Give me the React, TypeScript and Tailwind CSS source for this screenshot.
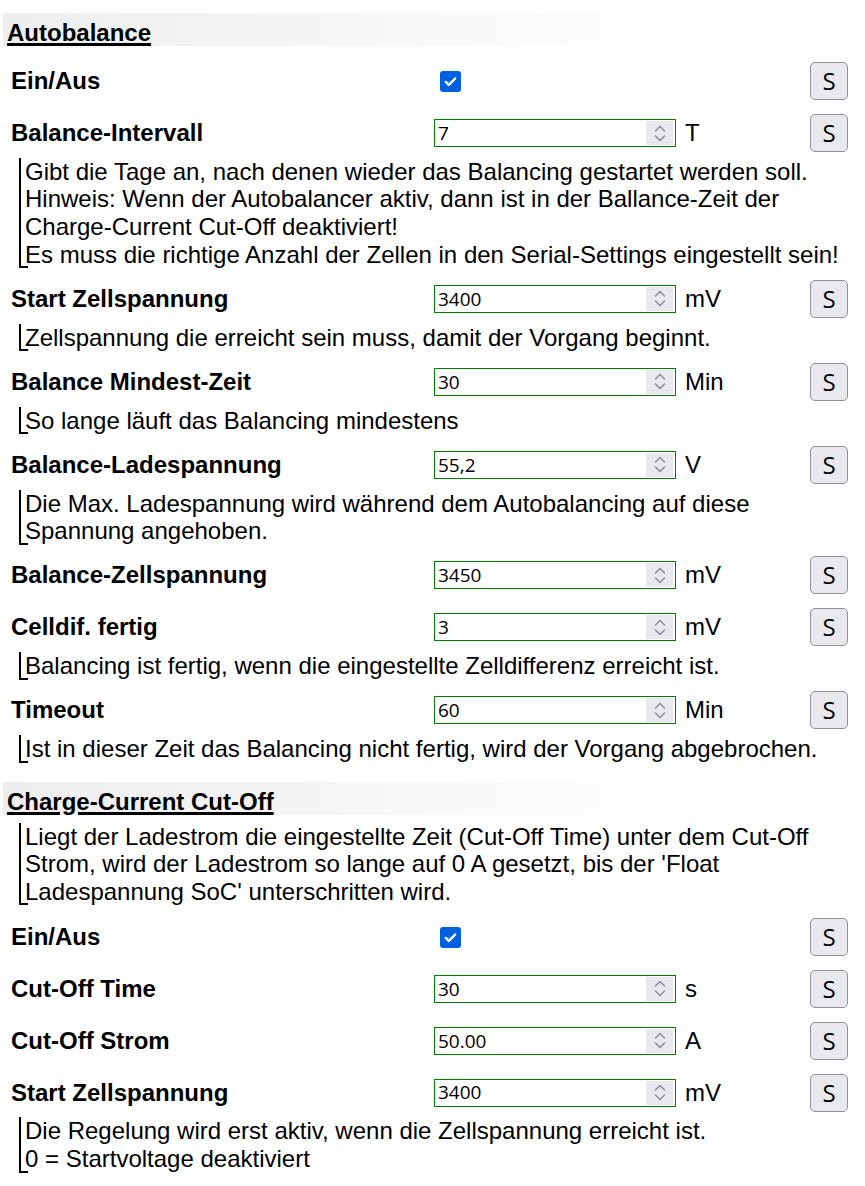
import React from "react";

type Row = {
  label: string;
  kind: "check" | "num";
  value?: string;
  unit?: string;
  desc?: string[];
};

type Section = {
  title: string;
  desc?: string[];
  rows: Row[];
};

const sections: Section[] = [
  {
    title: "Autobalance",
    rows: [
      { label: "Ein/Aus", kind: "check" },
      {
        label: "Balance-Intervall",
        kind: "num",
        value: "7",
        unit: "T",
        desc: [
          "Gibt die Tage an, nach denen wieder das Balancing gestartet werden soll.",
          "Hinweis: Wenn der Autobalancer aktiv, dann ist in der Ballance-Zeit der",
          "Charge-Current Cut-Off deaktiviert!",
          "Es muss die richtige Anzahl der Zellen in den Serial-Settings eingestellt sein!",
        ],
      },
      {
        label: "Start Zellspannung",
        kind: "num",
        value: "3400",
        unit: "mV",
        desc: ["Zellspannung die erreicht sein muss, damit der Vorgang beginnt."],
      },
      {
        label: "Balance Mindest-Zeit",
        kind: "num",
        value: "30",
        unit: "Min",
        desc: ["So lange läuft das Balancing mindestens"],
      },
      {
        label: "Balance-Ladespannung",
        kind: "num",
        value: "55,2",
        unit: "V",
        desc: [
          "Die Max. Ladespannung wird während dem Autobalancing auf diese",
          "Spannung angehoben.",
        ],
      },
      { label: "Balance-Zellspannung", kind: "num", value: "3450", unit: "mV" },
      {
        label: "Celldif. fertig",
        kind: "num",
        value: "3",
        unit: "mV",
        desc: ["Balancing ist fertig, wenn die eingestellte Zelldifferenz erreicht ist."],
      },
      {
        label: "Timeout",
        kind: "num",
        value: "60",
        unit: "Min",
        desc: ["Ist in dieser Zeit das Balancing nicht fertig, wird der Vorgang abgebrochen."],
      },
    ],
  },
  {
    title: "Charge-Current Cut-Off",
    desc: [
      "Liegt der Ladestrom die eingestellte Zeit (Cut-Off Time) unter dem Cut-Off",
      "Strom, wird der Ladestrom so lange auf 0 A gesetzt, bis der 'Float",
      "Ladespannung SoC' unterschritten wird.",
    ],
    rows: [
      { label: "Ein/Aus", kind: "check" },
      { label: "Cut-Off Time", kind: "num", value: "30", unit: "s" },
      { label: "Cut-Off Strom", kind: "num", value: "50.00", unit: "A" },
      {
        label: "Start Zellspannung",
        kind: "num",
        value: "3400",
        unit: "mV",
        desc: [
          "Die Regelung wird erst aktiv, wenn die Zellspannung erreicht ist.",
          "0 = Startvoltage deaktiviert",
        ],
      },
    ],
  },
];

function Desc({ lines, className = "" }: { lines: string[]; className?: string }) {
  return (
    <div className={`relative ml-[19px] border-l-2 border-black pl-[4px] text-[24px] leading-[27.6px] whitespace-nowrap ${className}`}>
      {lines.map((l, i) => (
        <div key={i}>{l}</div>
      ))}
      {/* kleiner Haken unten links */}
      <span className="absolute bottom-0 left-[-2px] h-[2px] w-[9px] bg-black" />
    </div>
  );
}

function Checkbox() {
  return (
    <div className="ml-[6px] flex h-[21px] w-[21px] items-center justify-center rounded-[3px] bg-[#0060df]">
      <svg width="15" height="15" viewBox="0 0 16 16" fill="none">
        <path d="M3 8.5l3.2 3.2L13 4.8" stroke="white" strokeWidth="2.6" strokeLinecap="round" strokeLinejoin="round" />
      </svg>
    </div>
  );
}

function NumInput({ value }: { value: string }) {
  return (
    <div className="flex h-[28px] w-[242px] items-stretch border border-[#008000] bg-white">
      <input
        readOnly
        value={value}
        className="min-w-0 flex-1 bg-transparent pl-[3px] font-['Open_Sans',sans-serif] text-[19px] text-black outline-none"
      />
      <div className="my-[1px] mr-[2px] flex w-[27px] flex-col items-center justify-center gap-[3px] bg-[#e9e9ed]">
        <svg width="12" height="7" viewBox="0 0 12 7" fill="none">
          <path d="M1.5 6L6 1.5 10.5 6" stroke="#8f8f9d" strokeWidth="1.6" strokeLinecap="round" strokeLinejoin="round" />
        </svg>
        <svg width="12" height="7" viewBox="0 0 12 7" fill="none">
          <path d="M1.5 1L6 5.5 10.5 1" stroke="#8f8f9d" strokeWidth="1.6" strokeLinecap="round" strokeLinejoin="round" />
        </svg>
      </div>
    </div>
  );
}

function SettingRow({ row }: { row: Row }) {
  return (
    <>
      <div className="mt-[8.5px] flex h-[43.4px] items-center pl-[11px] pr-[17px]">
        <div className="w-[423px] text-[24px] font-bold">{row.label}</div>
        <div className="w-[242px]">
          {row.kind === "check" ? <Checkbox /> : <NumInput value={row.value ?? ""} />}
        </div>
        <div className="ml-[9px] flex-1 text-[24px]">{row.unit}</div>
        <button className="flex h-[38px] w-[38px] items-center justify-center rounded-[5px] border border-[#8f8f9d] bg-[#e9e9ed] font-['Open_Sans',sans-serif] text-[24px] text-black">
          S
        </button>
      </div>
      {row.desc && <Desc lines={row.desc} className="mt-[3px] mb-[9px]" />}
    </>
  );
}

export default function App() {
  return (
    <div className="min-h-[1186px] w-[865px] bg-white pt-[13px] font-['Liberation_Sans',Arial,sans-serif] text-black">
      {sections.map((s, i) => (
        <div key={s.title} className={i > 0 ? "mt-[19px]" : ""}>
          <div className="mx-[3px] h-[33px] bg-linear-to-r from-[#eeeeee] to-white to-80% pl-[4px] pt-[2px]">
            <span className="text-[24px] font-bold underline decoration-[3px] underline-offset-[2px]">{s.title}</span>
          </div>
          {s.desc && <Desc lines={s.desc} className="mt-[8px] mb-[10px]" />}
          <div className={s.desc ? "" : "pt-[5px]"}>
            {s.rows.map((r, j) => (
              <SettingRow key={j} row={r} />
            ))}
          </div>
        </div>
      ))}
    </div>
  );
}
